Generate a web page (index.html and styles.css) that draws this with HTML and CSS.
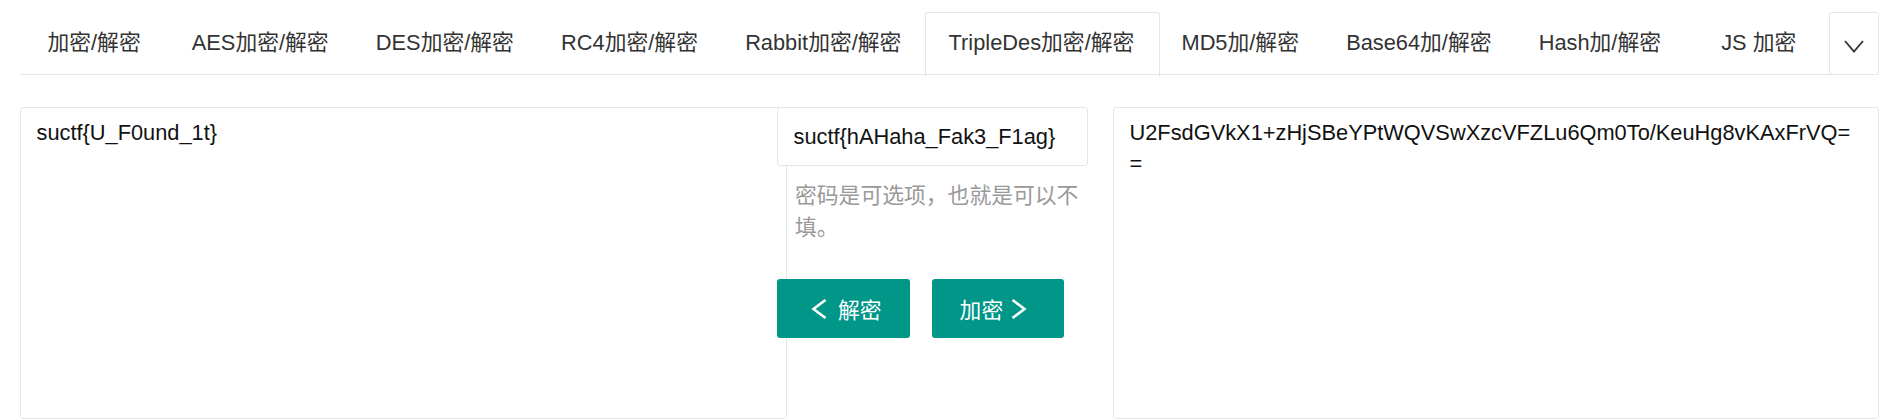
FILE: index.html
```html
<!DOCTYPE html>
<html lang="zh-CN">
<head>
<meta charset="utf-8">
<title>TripleDes加密/解密</title>
<link rel="stylesheet" href="styles.css">
</head>
<body>
<div class="page">
  <div class="tab">
    <ul class="tab-title">
      <li>加密/解密</li>
      <li>AES加密/解密</li>
      <li>DES加密/解密</li>
      <li>RC4加密/解密</li>
      <li>Rabbit加密/解密</li>
      <li class="this">TripleDes加密/解密</li>
      <li>MD5加/解密</li>
      <li>Base64加/解密</li>
      <li>Hash加/解密</li>
      <li>JS 加密</li>
    </ul>
    <span class="tab-bar"><svg class="bar-icon" width="20" height="13" viewBox="0 0 20 13"><polyline points="1,1 10,11.5 19,1" fill="none" stroke="#333" stroke-width="1.8"/></svg></span>
  </div>
  <div class="tool">
    <textarea class="textarea left">suctf{U_F0und_1t}</textarea>
    <div class="mid">
      <input class="input" type="text" value="suctf{hAHaha_Fak3_F1ag}">
      <div class="aux">密码是可选项，也就是可以不填。</div>
      <div class="btns">
        <button class="btn"><svg class="ico" width="27" height="20" viewBox="0 0 27 20"><polyline points="20.5,1 8.5,10 20.5,19" fill="none" stroke="#fff" stroke-width="2.6"/></svg><span>解密</span></button>
        <button class="btn"><span>加密</span><svg class="ico" width="27" height="20" viewBox="0 0 27 20"><polyline points="3.5,1 15.5,10 3.5,19" fill="none" stroke="#fff" stroke-width="2.6"/></svg></button>
      </div>
    </div>
    <textarea class="textarea right">U2FsdGVkX1+zHjSBeYPtWQVSwXzcVFZLu6Qm0To/KeuHg8vKAxFrVQ==</textarea>
  </div>
</div>
</body>
</html>
```
FILE: styles.css
```css
* { box-sizing: border-box; }
html, body { margin: 0; padding: 0; background: #fff; }
body {
  font-family: "Liberation Sans", "Noto Sans CJK SC", sans-serif;
  font-size: 21.8px;
  color: #333;
}
.page { margin: 0 12px 0 20px; padding-top: 12px; }
.tab { position: relative; }
.tab-title {
  display: flex;
  margin: 0;
  padding: 0;
  list-style: none;
  height: 63px;
  border-bottom: 1px solid #e6e6e6;
  white-space: nowrap;
}
.tab-title li {
  position: relative;
  flex: none;
  box-sizing: content-box;
  min-width: 101px;
  padding: 0 23.6px;
  line-height: 62px;
  text-align: center;
}
.tab-title li.this::after {
  content: "";
  position: absolute;
  left: 0;
  top: 0;
  width: 100%;
  height: 63px;
  border: 1px solid #e6e6e6;
  border-bottom-color: #fff;
  border-radius: 3px 3px 0 0;
}
.tab-bar {
  position: absolute;
  right: 0;
  top: 0;
  z-index: 10;
  width: 50px;
  height: 63px;
  border: 1px solid #e6e6e6;
  border-radius: 3px;
  background: #fff;
  display: flex;
  align-items: center;
  justify-content: center;
  padding-top: 6px;
}
.bar-icon { display: block; }
.tool {
  display: flex;
  align-items: flex-start;
  margin-top: 32px;
}
.textarea {
  display: block;
  flex: none;
  height: 312px;
  border: 1px solid #e6e6e6;
  border-radius: 3px;
  padding: 9px 15.5px;
  font: inherit;
  line-height: 31px;
  color: #111;
  background: #fff;
  resize: none;
  outline: none;
  overflow: hidden;
}
.left { width: 767px; }
.right { width: 766px; margin-left: 25px; }
.mid { flex: none; width: 311px; margin-left: -10px; }
.input {
  display: block;
  width: 100%;
  height: 59px;
  border: 1px solid #e6e6e6;
  border-radius: 3px;
  padding: 0 15.5px;
  font: inherit;
  color: #111;
  background: #fff;
  outline: none;
}
.aux {
  padding: 14px 0 14px 18px;
  line-height: 32px;
  color: #999;
}
.btns { display: flex; gap: 22px; margin-top: 21px; }
.btn {
  display: flex;
  align-items: center;
  gap: 6px;
  height: 59px;
  padding: 0 28px;
  border: 0;
  border-radius: 3px;
  background: #009688;
  color: #fff;
  font: inherit;
  white-space: nowrap;
}
.ico { display: block; }
```
